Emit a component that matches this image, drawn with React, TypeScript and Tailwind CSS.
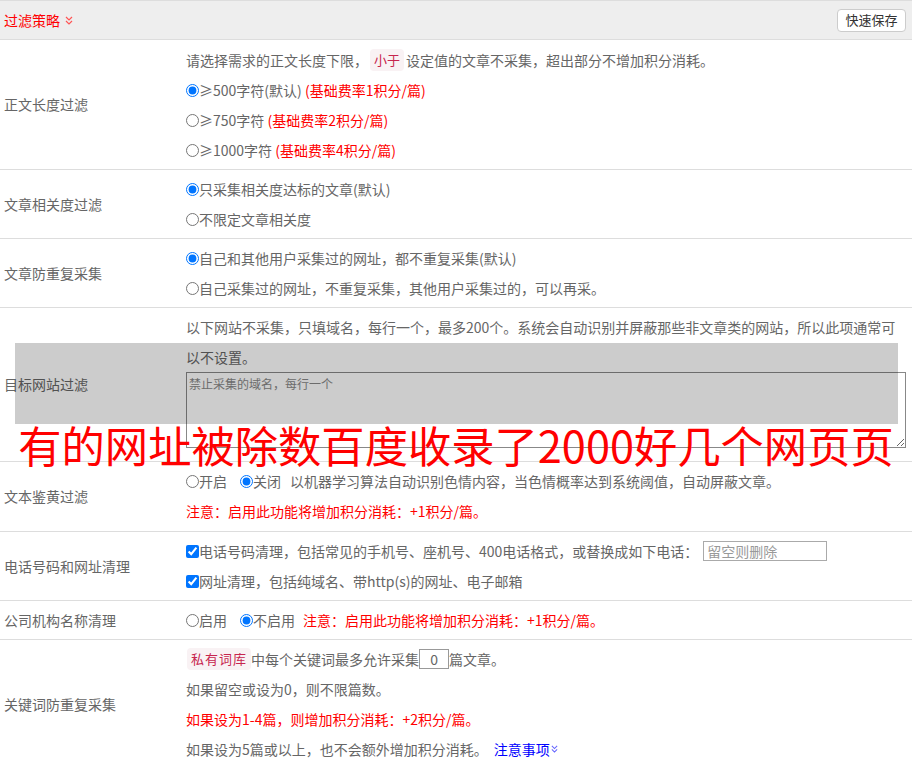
import React from "react";

function DoubleChevron({ color, className }: { color: string; className?: string }) {
  return (
    <svg viewBox="0 0 8 9" className={className} fill="none" stroke={color} strokeWidth="1.2">
      <polyline points="1,1 4,4 7,1" />
      <polyline points="1,5 4,8 7,5" />
    </svg>
  );
}

function Line({ children, className = "" }: { children: React.ReactNode; className?: string }) {
  return <div className={"h-[30px] flex items-center whitespace-nowrap " + className}>{children}</div>;
}

function Radio({ name, checked }: { name: string; checked?: boolean }) {
  return (
    <input
      type="radio"
      name={name}
      defaultChecked={checked}
      className="m-0 w-[13px] h-[13px] shrink-0"
    />
  );
}

function Check() {
  return <input type="checkbox" defaultChecked className="m-0 w-[13px] h-[13px] shrink-0" />;
}

function Row({ label, children, className = "py-[4px]" }: { label: string; children: React.ReactNode; className?: string }) {
  return (
    <div className="flex border-b border-[#ddd]">
      <div className="w-[186px] shrink-0 pl-[4px] flex items-center">{label}</div>
      <div className={"flex-1 pr-[7px] " + className}>{children}</div>
    </div>
  );
}

const Tag = ({ children, className = "" }: { children: React.ReactNode; className?: string }) => (
  <span className={"bg-[#f9f2f4] text-[#c7254e] rounded-[4px] px-[4px] py-[1px] text-[13px] " + className}>{children}</span>
);

export default function App() {
  return (
    <div className="relative w-[912px] h-[768px] overflow-hidden bg-white text-[14px] text-[#666] font-['Noto_Sans_CJK_SC','Noto_Sans',sans-serif]">
      <div className="h-[40px] bg-[#eee] border-t border-b border-[#ddd] flex items-center justify-between pl-[4px] pr-[6px]">
        <div className="flex items-center text-[#f00]">
          <span>过滤策略</span>
          <DoubleChevron color="#f55" className="w-[8px] h-[9px] ml-[5px]" />
        </div>
        <button className="h-[23px] w-[69px] bg-white border border-[#ccc] rounded-[4px] text-[13px] text-[#333] flex items-center justify-center">
          快速保存
        </button>
      </div>

      <Row label="正文长度过滤" className="pt-[5px] pb-[4px]">
        <Line>
          请选择需求的正文长度下限，<Tag className="mx-[2px]">小于</Tag> 设定值的文章不采集，超出部分不增加积分消耗。
        </Line>
        <Line>
          <Radio name="len" checked />≥500字符(默认)&nbsp;<span className="text-[#f00]">(基础费率1积分/篇)</span>
        </Line>
        <Line>
          <Radio name="len" />≥750字符&nbsp;<span className="text-[#f00]">(基础费率2积分/篇)</span>
        </Line>
        <Line>
          <Radio name="len" />≥1000字符&nbsp;<span className="text-[#f00]">(基础费率4积分/篇)</span>
        </Line>
      </Row>

      <Row label="文章相关度过滤">
        <Line>
          <Radio name="rel" checked />只采集相关度达标的文章(默认)
        </Line>
        <Line>
          <Radio name="rel" />不限定文章相关度
        </Line>
      </Row>

      <Row label="文章防重复采集">
        <Line>
          <Radio name="dup" checked />自己和其他用户采集过的网址，都不重复采集(默认)
        </Line>
        <Line>
          <Radio name="dup" />自己采集过的网址，不重复采集，其他用户采集过的，可以再采。
        </Line>
      </Row>

      <Row label="目标网站过滤" className="pt-[4px] pb-[4px]">
        <Line>以下网站不采集，只填域名，每行一个，最多200个。系统会自动识别并屏蔽那些非文章类的网站，所以此项通常可</Line>
        <Line>以不设置。</Line>
        <textarea
          placeholder="禁止采集的域名，每行一个"
          className="block w-[720px] h-[76px] mb-[9px] border border-[#888] px-[2px] py-[2px] text-[12px] leading-[18px] placeholder:text-[#888] outline-none"
        />
      </Row>

      <Row label="文本鉴黄过滤" className="pt-[4px] pb-[5px]">
        <Line>
          <Radio name="porn" />开启
          <span className="ml-[13px] flex items-center">
            <Radio name="porn" checked />关闭
          </span>
          <span className="ml-[9px]">以机器学习算法自动识别色情内容，当色情概率达到系统阈值，自动屏蔽文章。</span>
        </Line>
        <Line className="text-[#f00]">注意：启用此功能将增加积分消耗：+1积分/篇。</Line>
      </Row>

      <Row label="电话号码和网址清理">
        <Line>
          <Check />电话号码清理，包括常见的手机号、座机号、400电话格式，或替换成如下电话：
          <input
            placeholder="留空则删除"
            className="ml-[5px] w-[124px] h-[20px] border border-[#aaa] px-[3px] text-[14px] placeholder:text-[#999] outline-none"
          />
        </Line>
        <Line>
          <Check />网址清理，包括纯域名、带http(s)的网址、电子邮箱
        </Line>
      </Row>

      <Row label="公司机构名称清理">
        <Line>
          <Radio name="org" />启用
          <span className="ml-[13px] flex items-center">
            <Radio name="org" checked />不启用
          </span>
          <span className="ml-[8px] text-[#f00]">注意：启用此功能将增加积分消耗：+1积分/篇。</span>
        </Line>
      </Row>

      <Row label="关键词防重复采集">
        <Line>
          <Tag className="ml-[1px] tracking-[1px]">私有词库</Tag>中每个关键词最多允许采集
          <input
            defaultValue="0"
            className="w-[30px] h-[20px] border border-[#999] text-center text-[14px] text-[#666] outline-none"
          />
          篇文章。
        </Line>
        <Line>如果留空或设为0，则不限篇数。</Line>
        <Line className="text-[#f00]">如果设为1-4篇，则增加积分消耗：+2积分/篇。</Line>
        <Line>
          如果设为5篇或以上，也不会额外增加积分消耗。
          <span className="ml-[6px] text-[#00f] flex items-center">
            注意事项
            <DoubleChevron color="#66f" className="w-[7px] h-[8px] ml-[1px]" />
          </span>
        </Line>
      </Row>

      <div className="absolute left-[15px] top-[343px] w-[883px] h-[81px] bg-black/20 pointer-events-none" />
      <div className="absolute left-0 top-[423px] w-full text-center text-[43.3px] leading-none text-[#f00] whitespace-nowrap pointer-events-none">
        有的网址被除数百度收录了2000好几个网页页
      </div>
    </div>
  );
}
